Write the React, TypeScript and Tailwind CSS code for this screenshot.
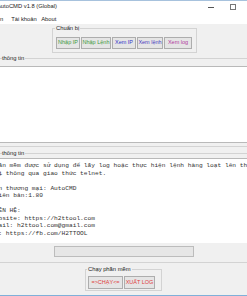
export default function App() {
  const btn =
    "h-[12px] border border-[#adadad] bg-[#e5e5e5] text-[5.5px] leading-none flex items-center justify-center whitespace-nowrap";
  const lines = [
    "Phần mềm được sử dụng để lấy log hoặc thực hiện lệnh hàng loạt lên thiết",
    " bị thông qua giao thức telnet.",
    "",
    "Tên thương mại: AutoCMD",
    "Phiên bản:1.80",
    "",
    "LIÊN HỆ:",
    "Website: https://h2ttool.com",
    "Gmail: h2ttool.com@gmail.com",
    "Fb: https://fb.com/H2TTOOL",
  ];
  return (
    <div className="w-[247px] h-[296px] overflow-hidden bg-[#f0f0f0] flex flex-col text-[#222] font-['Liberation_Sans',Arial,sans-serif]">
      {/* Title bar */}
      <div className="h-[15px] shrink-0 bg-white border-t border-[#a7c2dd] flex items-start pt-[2px]">
        <span className="ml-[-3px] text-[5.8px] leading-[7px] whitespace-nowrap">AutoCMD v1.8 (Global)</span>
        <div className="ml-auto flex items-center gap-[16px] mr-[11px] h-[8px]">
          <div className="w-[6px] h-px bg-[#555]" />
          <div className="w-[6px] h-[6px] border border-[#777]" />
        </div>
      </div>
      {/* Menu bar */}
      <div className="h-[9px] shrink-0 bg-white flex items-center text-[5.8px] leading-none whitespace-nowrap">
        <span>n</span>
        <span className="ml-[8px]">Tài khoản</span>
        <span className="ml-[4.5px]">About</span>
      </div>
      {/* Chuẩn bị */}
      <div className="relative mt-[4px] ml-[52px] w-[145px] h-[25px] border border-[#d3d3d3] shrink-0">
        <span className="absolute left-[2px] top-[-4px] bg-[#f0f0f0] px-[1px] text-[5.8px] leading-[7px] whitespace-nowrap">
          Chuẩn bị
        </span>
        <div className="flex gap-[1px] pt-[8px] pl-[3px]">
          <div className={`${btn} w-[24px] text-[#3f9a3f]`}>Nhập IP</div>
          <div className={`${btn} w-[30px] text-[#3f9a3f]`}>Nhập Lệnh</div>
          <div className={`${btn} w-[24px] text-[#3535c8]`}>Xem IP</div>
          <div className={`${btn} w-[26px] text-[#4a3cc0]`}>Xem lệnh</div>
          <div className={`${btn} w-[28px] text-[#b23a9e]`}>Xem log</div>
        </div>
      </div>
      {/* Group 1 */}
      <div className="relative mt-[5px] border-t border-b border-[#d3d3d3] pt-[7px] pb-[3px] shrink-0">
        <span className="absolute left-[2px] top-[-4px] bg-[#f0f0f0] pr-[1px] text-[5.8px] leading-[7px] whitespace-nowrap">
          thông tin
        </span>
        <div className="h-[77px] bg-white border-t border-b border-[#b9b9b9]" />
      </div>
      {/* Group 2 */}
      <div className="relative mt-[6px] border-t border-b border-[#d3d3d3] pt-[4px] pb-[5px] shrink-0">
        <span className="absolute left-[2px] top-[-4px] bg-[#f0f0f0] pr-[1px] text-[5.8px] leading-[7px] whitespace-nowrap">
          thông tin
        </span>
        <div className="h-[85px] bg-white border-t border-[#b9b9b9] overflow-hidden pt-[3px]">
          <div className="ml-[-9px] font-['Liberation_Mono',monospace] text-[6.2px] leading-[7.5px] text-[#333] whitespace-pre">
            {lines.map((l, i) => (
              <div key={i} className="h-[7.5px]">{l}</div>
            ))}
          </div>
        </div>
        <div className="mt-[3px] ml-[54px] w-[140px] h-[11px] border border-[#bcbcbc] bg-[#e6e6e6]" />
      </div>
      {/* Chạy phần mềm */}
      <div className="relative mt-[6px] ml-[85px] w-[77px] h-[22px] border border-[#d3d3d3] shrink-0">
        <span className="absolute left-[1px] top-[-4px] bg-[#f0f0f0] px-[1px] text-[5.8px] leading-[7px] whitespace-nowrap">
          Chạy phần mềm
        </span>
        <div className="flex gap-[1px] pt-[6px] pl-[2px]">
          <div className={`${btn} h-[13px] w-[35px] text-[#e04040]`}>=&gt;CHẠY&lt;=</div>
          <div className={`${btn} h-[13px] w-[31px] text-[#e04040]`}>XUẤT LOG</div>
        </div>
      </div>
      <div className="mt-auto h-[1px] bg-[#7fb0d9] shrink-0" />
    </div>
  );
}
